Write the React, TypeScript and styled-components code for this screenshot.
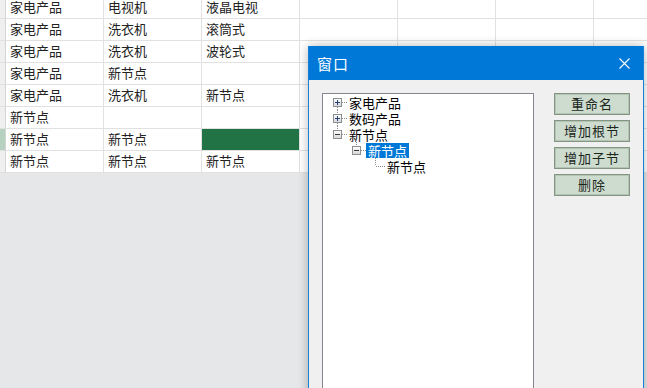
import React from 'react';
import styled, { createGlobalStyle } from 'styled-components';

const GlobalStyle = createGlobalStyle`
  html, body {
    margin: 0;
    padding: 0;
    background: #e6e7e9;
  }
  body {
    font-family: "Noto Sans CJK SC", "Noto Sans", sans-serif;
  }
`;

const Page = styled.div`
  position: relative;
  width: 647px;
  height: 388px;
  overflow: hidden;
  background: #e6e7e9;
`;

// Spreadsheet
const Sheet = styled.div`
  display: flex;
  flex-direction: column;
  margin-top: -3px;
`;

const Row = styled.div`
  display: grid;
  grid-template-columns: 6px repeat(7, 98px);
  height: 22px;
`;

const RowHeader = styled.div<{ $selected?: boolean }>`
  background: ${({ $selected }) => ($selected ? '#b6d1bf' : '#efefef')};
  border-right: 1px solid #d4d4d4;
  border-bottom: 1px solid #e1e1e1;
`;

const Cell = styled.div<{ $active?: boolean }>`
  box-sizing: border-box;
  background: ${({ $active }) => ($active ? '#217346' : '#ffffff')};
  border-right: 1px solid #e1e1e1;
  border-bottom: 1px solid #e1e1e1;
  padding: 0 0 2px 4px;
  font-size: 13px;
  line-height: 19px;
  color: #222;
  white-space: nowrap;
  overflow: hidden;
`;

// Dialog window
const Window = styled.div`
  position: absolute;
  left: 308px;
  top: 46px;
  width: 336px;
  height: 380px;
  box-sizing: border-box;
  background: #f0f0f0;
  border-left: 1px solid #1a80d6;
  border-right: 1px solid #1a80d6;
  box-shadow: 0 0 10px rgba(0, 0, 0, 0.28);
  display: flex;
  flex-direction: column;
`;

const TitleBar = styled.div`
  height: 34px;
  background: #0078d7;
  color: #fff;
  display: flex;
  align-items: center;
  justify-content: space-between;
  padding: 0 13px 0 8px;
  font-size: 15px;
`;

const Title = styled.span`
  letter-spacing: 1px;
  line-height: 1;
`;

const Body = styled.div`
  display: flex;
  gap: 20px;
  padding: 13px 0 0 13px;
`;

const TreeBox = styled.div`
  width: 212px;
  height: 320px;
  box-sizing: border-box;
  background: #fff;
  border: 1px solid #828790;
  padding: 0 0 0 5px;
  display: flex;
  flex-direction: column;
`;

const TreeRow = styled.div`
  display: flex;
  align-items: center;
  height: 16px;
`;

const Label = styled.span<{ $selected?: boolean }>`
  display: inline-block;
  height: 15px;
  line-height: 15px;
  padding: 0 2px;
  font-size: 13px;
  color: ${({ $selected }) => ($selected ? '#fff' : '#000')};
  background: ${({ $selected }) => ($selected ? '#0078d7' : 'transparent')};
  white-space: nowrap;
`;

const ButtonColumn = styled.div`
  display: flex;
  flex-direction: column;
  gap: 5px;
`;

const ActionButton = styled.button`
  width: 76px;
  height: 22px;
  box-sizing: border-box;
  padding: 0;
  background: #cedccf;
  border: 1px solid #829682;
  box-shadow: inset 0 0 0 1px #b3c3b4;
  color: #1b261b;
  font-family: "Noto Sans CJK SC", "Noto Sans", sans-serif;
  font-size: 13px;
  line-height: 20px;
  letter-spacing: 1px;
`;

type ConnectorProps = {
  up?: boolean;
  down?: boolean;
  box?: 'plus' | 'minus';
  blank?: boolean;
};

const Connector: React.FC<ConnectorProps> = ({ up, down, box, blank }) => {
  const dot = { stroke: '#8c8c8c', strokeWidth: 1, strokeDasharray: '1 1' };
  return (
    <svg width="19" height="16" viewBox="0 0 19 16" style={{ flex: 'none' }}>
      {!blank && (
        <>
          {up && <line x1="9.5" y1="0" x2="9.5" y2={box ? 4 : 8} {...dot} />}
          {down && <line x1="9.5" y1="13" x2="9.5" y2="16" {...dot} />}
          <line x1={box ? 14 : 10} y1="8.5" x2="19" y2="8.5" {...dot} />
          {box && (
            <>
              <defs>
                <linearGradient id="bx" x1="0" y1="0" x2="0" y2="1">
                  <stop offset="0" stopColor="#ffffff" />
                  <stop offset="1" stopColor="#d6d6d6" />
                </linearGradient>
              </defs>
              <rect x="5.5" y="4.5" width="8" height="8" fill="url(#bx)" stroke="#8e8f8f" />
              <line x1="7" y1="8.5" x2="12" y2="8.5" stroke={box === 'plus' ? '#23417a' : '#3a3a3a'} />
              {box === 'plus' && <line x1="9.5" y1="6" x2="9.5" y2="11" stroke="#23417a" />}
            </>
          )}
        </>
      )}
    </svg>
  );
};

const rows: { cells: string[]; selected?: boolean; active?: number }[] = [
  { cells: ['家电产品', '电视机', '液晶电视'] },
  { cells: ['家电产品', '洗衣机', '滚筒式'] },
  { cells: ['家电产品', '洗衣机', '波轮式'] },
  { cells: ['家电产品', '新节点', ''] },
  { cells: ['家电产品', '洗衣机', '新节点'] },
  { cells: ['新节点', '', ''] },
  { cells: ['新节点', '新节点', ''], selected: true, active: 2 },
  { cells: ['新节点', '新节点', '新节点'] },
];

const buttons = ['重命名', '增加根节', '增加子节', '删除'];

const App: React.FC = () => (
  <Page>
    <GlobalStyle />
    <Sheet>
      {rows.map((r, i) => (
        <Row key={i}>
          <RowHeader $selected={r.selected} />
          {Array.from({ length: 7 }).map((_, c) => (
            <Cell key={c} $active={r.active === c}>
              {r.cells[c] ?? ''}
            </Cell>
          ))}
        </Row>
      ))}
    </Sheet>

    <Window>
      <TitleBar>
        <Title>窗口</Title>
        <svg width="11" height="11" viewBox="0 0 11 11">
          <path d="M0.5 0.5 L10.5 10.5 M10.5 0.5 L0.5 10.5" stroke="#fff" strokeWidth="1.1" />
        </svg>
      </TitleBar>
      <Body>
        <TreeBox>
          <TreeRow>
            <Connector down box="plus" />
            <Label>家电产品</Label>
          </TreeRow>
          <TreeRow>
            <Connector up down box="plus" />
            <Label>数码产品</Label>
          </TreeRow>
          <TreeRow>
            <Connector up box="minus" />
            <Label>新节点</Label>
          </TreeRow>
          <TreeRow>
            <Connector blank />
            <Connector up box="minus" />
            <Label $selected>新节点</Label>
          </TreeRow>
          <TreeRow>
            <Connector blank />
            <Connector blank />
            <Connector up />
            <Label>新节点</Label>
          </TreeRow>
        </TreeBox>
        <ButtonColumn>
          {buttons.map((b) => (
            <ActionButton key={b}>{b}</ActionButton>
          ))}
        </ButtonColumn>
      </Body>
    </Window>
  </Page>
);

export default App;
